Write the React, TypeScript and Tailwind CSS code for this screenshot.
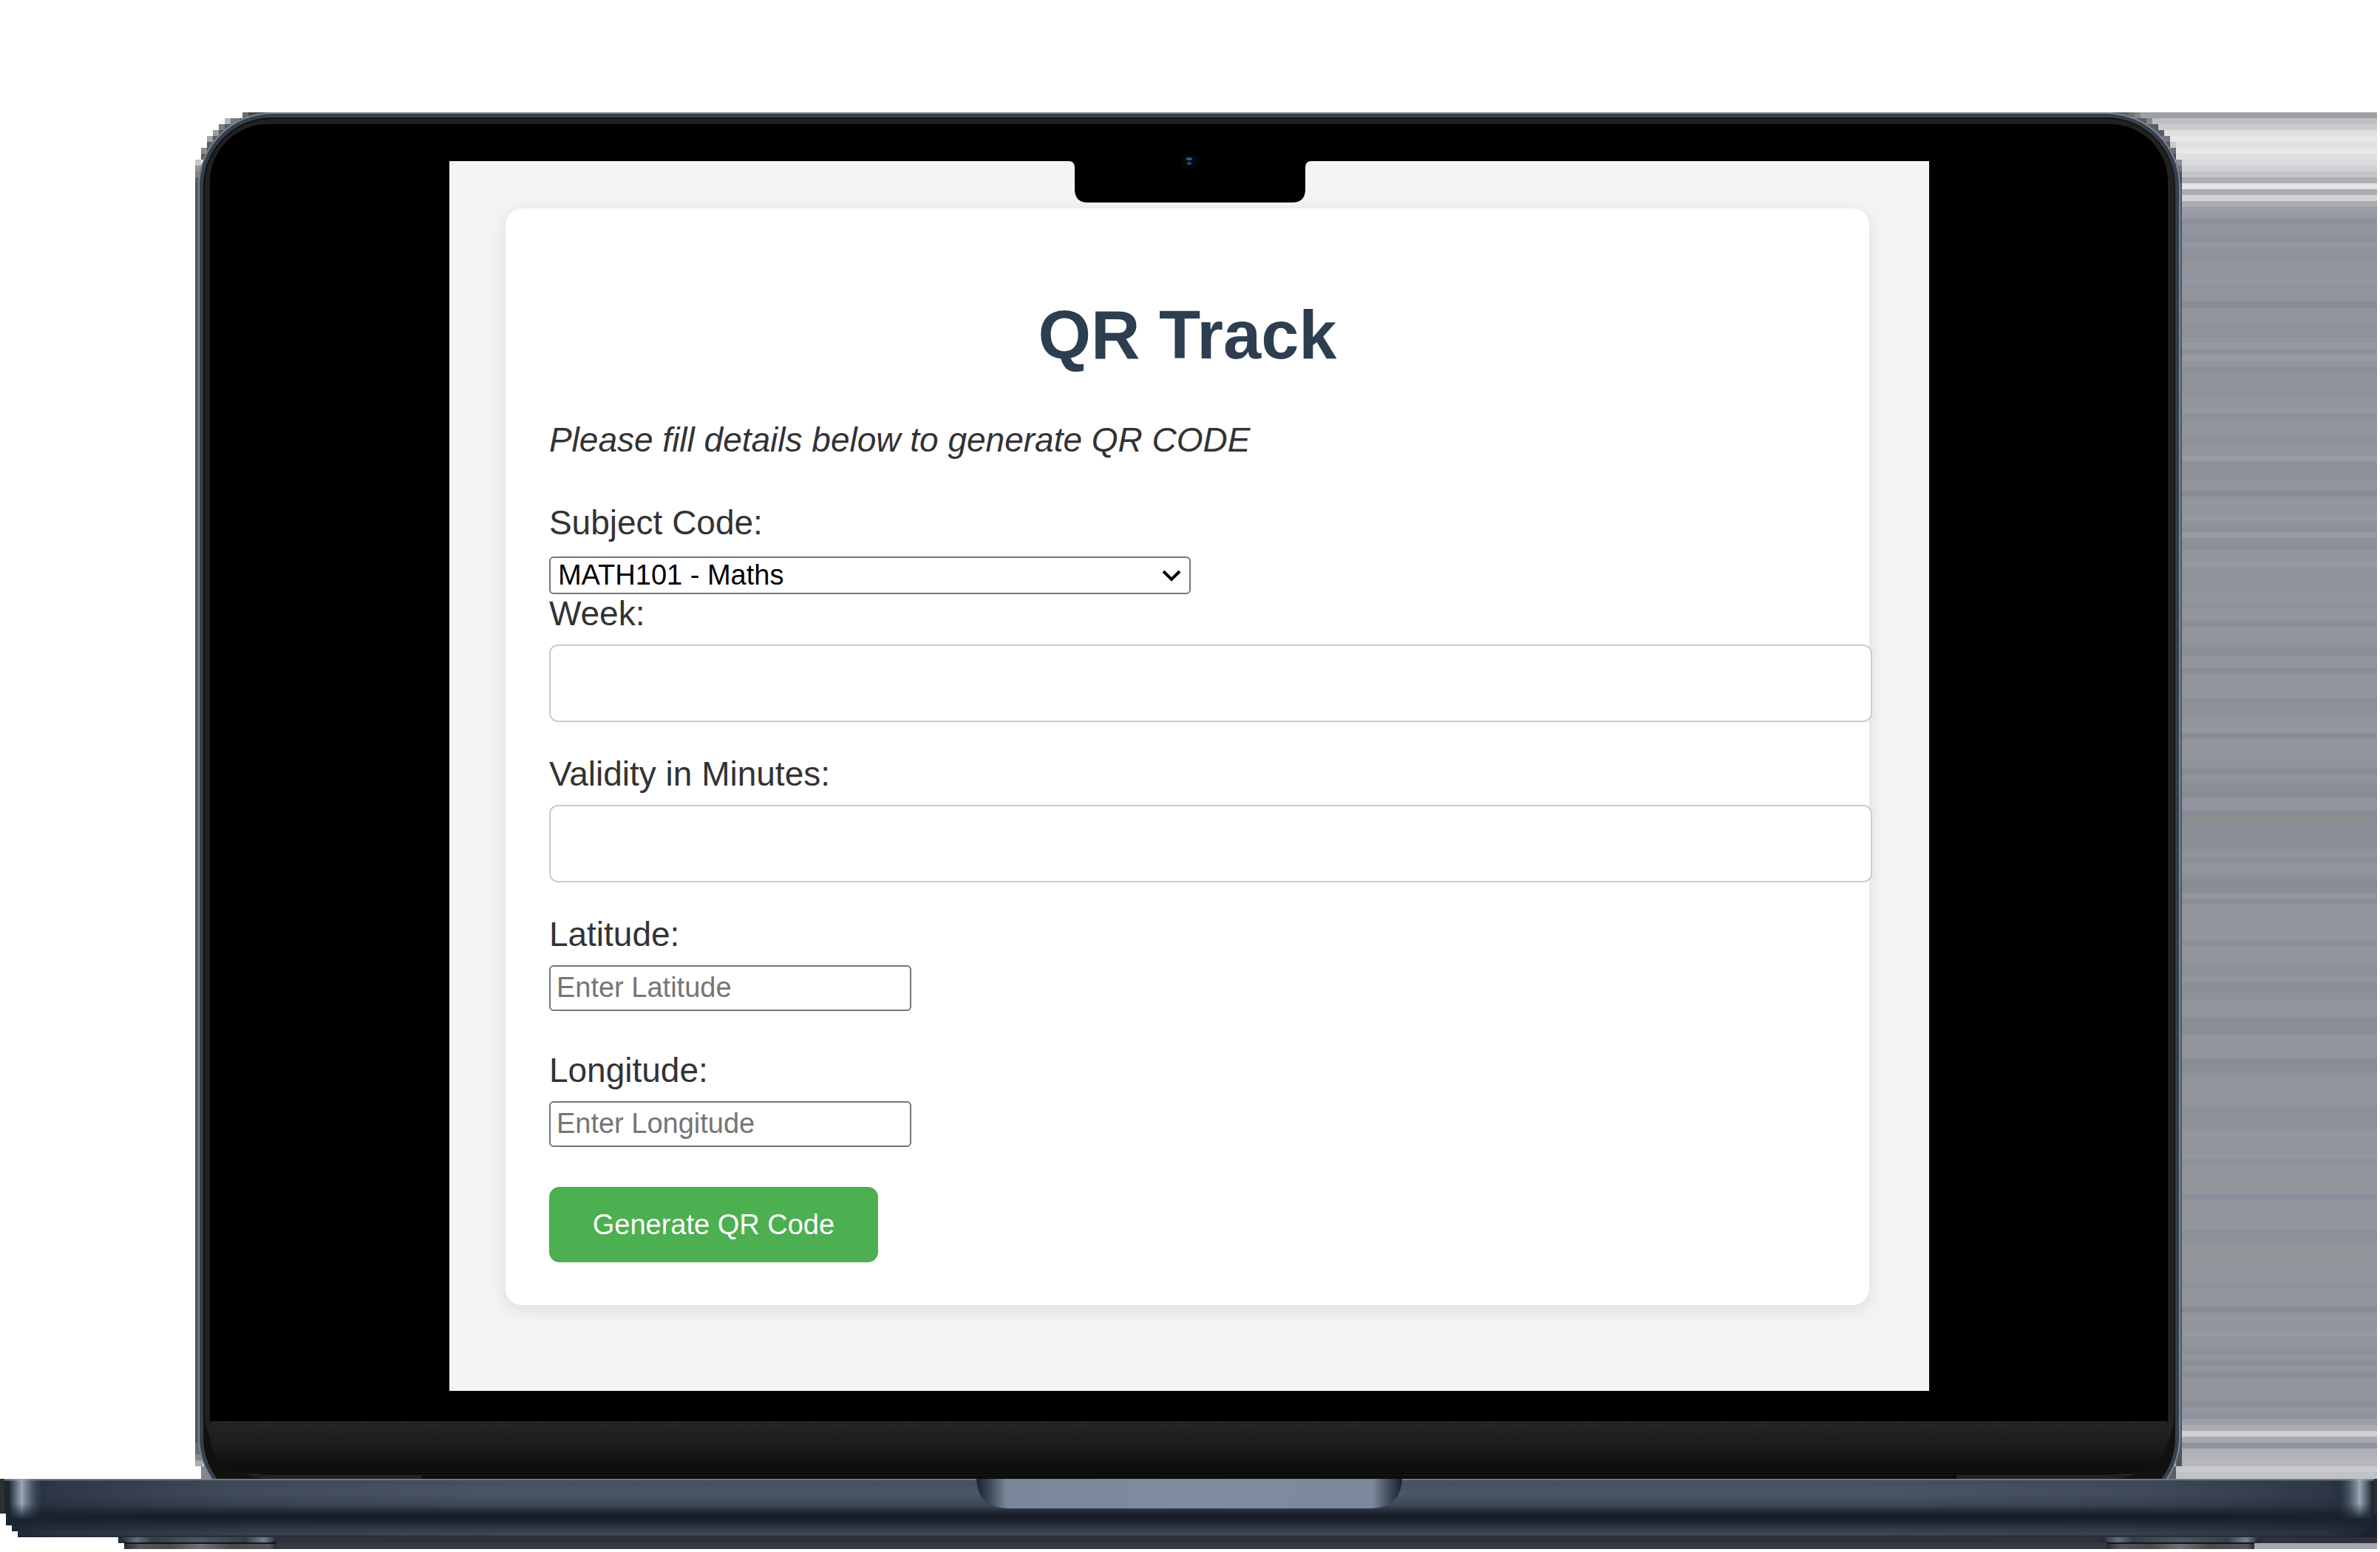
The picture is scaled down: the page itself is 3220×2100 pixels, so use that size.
import React from "react";

const TOP_STREAKS = [
  "#9d9fa3", "#bfc0c4", "#cbcbcd", "#e1e1e1", "#e8e8ea", "#e1e1e4", "#e8e8ea", "#dfdfe1",
  "#dadadc", "#cfd0d2", "#c4c5c9", "#aeafb1", "#e3e4e8", "#adaeb2", "#d2d4d5", "#a9abae",
  "#9a9da7", "#979aa4", "#8e9199", "#9397a0", "#9195a0", "#8e9199", "#9397a1", "#8f929b",
  "#8e9199", "#91949d", "#92959e", "#92959f", "#9397a0", "#92959e", "#91949d", "#91949d",
  "#898c90",
];

const BOTTOM_STREAKS = [
  "#9b9ea8", "#abacb1", "#d0d1d3", "#a9aaae", "#8f939d", "#adafb5",
  "#b3b4b9", "#b6b7bb", "#c9cacc", "#c0c2c4",
];

const MID_STREAKS: [number, number, string][] = [
  [440, 16, "#8f929a"], [464, 8, "#969aa3"], [472, 8, "#8e9199"], [480, 8, "#989ba4"],
  [496, 8, "#8b9199"], [504, 32, "#8f929a"], [552, 8, "#9398a1"], [560, 8, "#8d9098"],
  [576, 8, "#91999f"], [592, 8, "#8d9098"], [616, 8, "#999ba5"], [624, 24, "#8e9199"],
  [664, 8, "#888c8e"], [680, 8, "#91969e"], [696, 8, "#959aa2"], [712, 8, "#8d9099"],
  [720, 8, "#989ba4"], [728, 16, "#8c9098"], [760, 8, "#959aa2"], [768, 32, "#8e9299"],
  [816, 8, "#8d9199"], [840, 8, "#8b8e96"], [872, 16, "#8b9098"], [888, 8, "#93969f"],
  [904, 8, "#8a8d96"], [944, 8, "#8b9199"], [952, 16, "#8d9098"], [984, 8, "#92999f"],
  [992, 8, "#8a8d96"], [1032, 8, "#8c959c"], [1040, 8, "#898c8e"], [1056, 16, "#8b9098"],
  [1072, 8, "#888b94"], [1096, 8, "#898c96"], [1104, 8, "#8a8e8f"], [1112, 40, "#8b9098"],
  [1160, 8, "#8b9199"], [1184, 8, "#8a9097"], [1192, 16, "#898c94"], [1216, 8, "#8a8d96"],
  [1272, 8, "#8b8f96"], [1304, 16, "#8c9198"], [1320, 8, "#93969f"], [1328, 24, "#8b9098"],
  [1376, 24, "#8a8f96"], [1400, 8, "#92959e"], [1432, 16, "#8a8d95"], [1448, 8, "#8a9198"],
  [1496, 8, "#8b9199"], [1504, 24, "#8d9098"], [1560, 8, "#9397a0"], [1568, 8, "#8d9199"],
  [1600, 8, "#909596"], [1616, 8, "#8d9099"], [1640, 32, "#92959e"], [1664, 8, "#8a9199"],
  [1672, 8, "#8d9098"], [1696, 8, "#929596"], [1712, 24, "#92959e"], [1736, 8, "#8a9199"],
  [1768, 8, "#888c8e"], [1800, 8, "#959aa2"], [1824, 8, "#8b9199"], [1840, 8, "#8d9098"],
  [1856, 8, "#8b9098"], [1896, 8, "#8d9099"], [1904, 8, "#9397a1"], [1912, 8, "#8e9199"],
];

/* x, y, width and colour of the stair-stepped blocks round the lid's corners */
const LID_STEPS: [number, number, number, string][] = [
  [328, 152, 8, "#6b6d70"], [336, 152, 44, "#45474c"],
  [304, 160, 8, "#b3b4b6"], [312, 160, 12, "#77797c"], [324, 160, 20, "#47494e"],
  [296, 168, 8, "#7b7c7f"], [304, 168, 20, "#55575b"],
  [288, 176, 8, "#9b9c9e"], [296, 176, 16, "#55575b"],
  [280, 184, 8, "#a3a4a6"], [288, 184, 12, "#55575b"],
  [280, 192, 12, "#5b5d60"],
  [272, 200, 8, "#8b8c8f"], [280, 200, 8, "#4d4f53"],
  [272, 208, 10, "#5b5d60"],
  [264, 216, 8, "#c5c6ca"], [264, 224, 8, "#929396"], [264, 232, 8, "#828386"], [264, 240, 8, "#5d6064"],
  [2856, 152, 24, "#5d6064"], [2880, 152, 8, "#6f7676"], [2888, 152, 8, "#83878a"],
  [2888, 160, 16, "#5b5d60"], [2904, 160, 8, "#87888c"],
  [2904, 168, 16, "#5b5d60"], [2912, 176, 16, "#5b5d60"],
  [2920, 184, 16, "#77797c"], [2928, 192, 8, "#55575b"], [2936, 192, 8, "#c9cacc"],
  [2936, 200, 8, "#6b6c70"], [2936, 208, 8, "#47494e"],
  [2944, 216, 8, "#8b8c8f"], [2944, 224, 8, "#707276"], [2944, 232, 8, "#55575b"], [2944, 240, 8, "#484a4e"],
];

function Laptop() {
  return (
    <svg className="col-start-1 row-start-1 block w-full" viewBox="0 0 3220 2100" aria-hidden="true">
      <defs>
        <linearGradient id="base" x1="0" y1="2001" x2="0" y2="2080" gradientUnits="userSpaceOnUse">
          <stop offset="0" stopColor="#8a93a3" />
          <stop offset="0.03" stopColor="#465160" />
          <stop offset="0.25" stopColor="#4c5665" />
          <stop offset="0.45" stopColor="#3d4858" />
          <stop offset="0.54" stopColor="#262f3e" />
          <stop offset="0.62" stopColor="#161b27" />
          <stop offset="0.7" stopColor="#181e2a" />
          <stop offset="0.82" stopColor="#2b3643" />
          <stop offset="0.95" stopColor="#414858" />
          <stop offset="1" stopColor="#262a38" />
        </linearGradient>
        <linearGradient id="ends">
          <stop offset="0" stopColor="#1b2431" stopOpacity="1" />
          <stop offset="0.02" stopColor="#1b2431" stopOpacity="0.6" />
          <stop offset="0.1" stopColor="#1b2431" stopOpacity="0.2" />
          <stop offset="0.22" stopColor="#1b2431" stopOpacity="0" />
          <stop offset="0.78" stopColor="#1b2431" stopOpacity="0" />
          <stop offset="0.9" stopColor="#1b2431" stopOpacity="0.2" />
          <stop offset="0.98" stopColor="#1b2431" stopOpacity="0.6" />
          <stop offset="1" stopColor="#1b2431" stopOpacity="1" />
        </linearGradient>
        <linearGradient id="shine">
          <stop offset="0" stopColor="#9ba7b6" stopOpacity="0" />
          <stop offset="0.38" stopColor="#9ba7b6" stopOpacity="1" />
          <stop offset="0.55" stopColor="#8996a6" stopOpacity="0.7" />
          <stop offset="1" stopColor="#4a5665" stopOpacity="0" />
        </linearGradient>
        <linearGradient id="fade" x1="0" y1="0" x2="0" y2="1">
          <stop offset="0" stopColor="#fff" />
          <stop offset="0.6" stopColor="#fff" />
          <stop offset="1" stopColor="#000" />
        </linearGradient>
        <mask id="shineMask" maskUnits="userSpaceOnUse" x="0" y="2000" width="3220" height="60">
          <rect y="2001" width="3220" height="55" fill="url(#fade)" />
        </mask>
        <linearGradient id="chin" x1="0" y1="0" x2="0" y2="1">
          <stop offset="0" stopColor="#272524" />
          <stop offset="0.55" stopColor="#1b1a18" />
          <stop offset="0.85" stopColor="#0f0f0f" />
        </linearGradient>
        <linearGradient id="grip">
          <stop offset="0" stopColor="#182130" />
          <stop offset="0.03" stopColor="#3b4757" />
          <stop offset="0.07" stopColor="#7a879a" />
          <stop offset="0.5" stopColor="#7f8c9f" />
          <stop offset="0.93" stopColor="#7c889b" />
          <stop offset="0.97" stopColor="#3f4b5b" />
          <stop offset="1" stopColor="#182130" />
        </linearGradient>
        <linearGradient id="footTop">
          <stop offset="0" stopColor="#252d39" />
          <stop offset="0.1" stopColor="#62707f" />
          <stop offset="0.2" stopColor="#343f4d" />
          <stop offset="0.5" stopColor="#4c5766" />
          <stop offset="0.8" stopColor="#343f4d" />
          <stop offset="0.92" stopColor="#73808f" />
          <stop offset="1" stopColor="#252d39" />
        </linearGradient>
        <linearGradient id="footBottom">
          <stop offset="0" stopColor="#2c2c2c" />
          <stop offset="0.1" stopColor="#565656" />
          <stop offset="0.3" stopColor="#484848" />
          <stop offset="0.5" stopColor="#727272" />
          <stop offset="0.7" stopColor="#484848" />
          <stop offset="0.95" stopColor="#565656" />
          <stop offset="1" stopColor="#2c2c2c" />
        </linearGradient>
        <clipPath id="aboveBase">
          <rect width="3220" height="2001" />
        </clipPath>
      </defs>

      <g shapeRendering="crispEdges">
        <path d="M2952 400H3216V2001H2944V1984H2952Z" fill="#92959e" />
        {TOP_STREAKS.map((c, i) => (
          <rect key={i} x={i < 12 ? 2890 : 2950} y={152 + i * 8} width={i < 12 ? 326 : 266} height="8" fill={c} />
        ))}
        {MID_STREAKS.map(([y, h, c]) => (
          <rect key={y} x="2950" y={y} width="266" height={h} fill={c} />
        ))}
        {BOTTOM_STREAKS.map((c, i) => (
          <rect key={i} x="2930" y={1920 + i * 8} width="286" height={i === 9 ? 9 : 8} fill={c} />
        ))}
        <path d="M264 248H272V1984H264Z" fill="#51565b" />
        <path d="M2944 248H2952V1984H2944Z" fill="#50565f" />
        <path d="M264 1952h10v16h-10z" fill="#6b6c70" />
        <path d="M264 1968h10v8h-10z" fill="#84868a" />
        <path d="M264 1976h10v8h-10z" fill="#aaabad" />
        <path d="M272 1984h16v17h-16z" fill="#85888d" />
        <path d="M2930 1984h14v17h-14z" fill="#5b5d60" />
        {LID_STEPS.map(([x, y, w, c]) => (
          <rect key={x + "-" + y} x={x} y={y} width={w} height="8" fill={c} />
        ))}
      </g>

      <g clipPath="url(#aboveBase)">
        <rect x="268" y="152" width="2682" height="1893" rx="100" fill="#7b8590" />
        <rect x="270" y="154" width="2678" height="1889" rx="98" fill="#35404e" />
        <rect x="275" y="159" width="2668" height="1879" rx="93" fill="#11110f" />
        <rect x="277" y="161" width="2665" height="1841" rx="91" fill="#22211f" />
        <rect x="284" y="168" width="2649" height="1827" rx="78" fill="#000" />
        <path d="M285 1923H2932V1942C2932 1974 2911 1994 2880 1994H337C306 1994 285 1974 285 1942Z" fill="url(#chin)" />
        <path d="M571 2001H2647V1996H571Z" fill="#0c0c0c" />
      </g>

      <g shapeRendering="crispEdges">
        <path d="M0 2001H10V2048H0ZM3208 2001H3216V2048H3208Z" fill="#2f2f2f" />
        <path d="M375 2079H2842V2088H375ZM3058 2079H3216V2088H3058Z" fill="#2f303b" />
        <path d="M368 2088H2850V2096H368Z" fill="#343a46" />
        <path d="M3050 2088H3216V2096H3050Z" fill="#a5a8ac" />
        <path d="M3140 2048H3216V2080H3140Z" fill="#1d202d" />
        <path d="M160 2080H375V2088H160ZM2842 2080H3058V2088H2842Z" fill="#252d39" />
      </g>
      <path d="M6 2001H3212V2046Q3212 2080 3170 2080H24V2072H16V2064H8V2048H6Z" fill="url(#base)" />
      <path d="M6 2004H3212V2046Q3212 2080 3170 2080H24V2072H16V2064H8V2048H6Z" fill="url(#ends)" />
      <g mask="url(#shineMask)">
        <rect x="12" y="2001" width="46" height="55" fill="url(#shine)" />
        <rect x="-3210" y="2001" width="46" height="55" fill="url(#shine)" transform="scale(-1 1)" />
      </g>
      <path d="M1321 2001H1897C1895 2030 1880 2041 1851 2041H1367C1338 2041 1323 2030 1321 2001Z" fill="url(#grip)" />
      <path d="M164 2080H374L368 2087H170Z" fill="url(#footTop)" />
      <path d="M2844 2080H3056L3050 2087H2850Z" fill="url(#footTop)" />
      <rect x="168" y="2087" width="206" height="9" fill="url(#footBottom)" />
      <rect x="2850" y="2087" width="200" height="9" fill="url(#footBottom)" />
      <path d="M168 2087H374V2089H168ZM2850 2087H3050V2089H2850Z" fill="#151515" />
    </svg>
  );
}

function Notch() {
  return (
    <svg
      className="absolute top-0 left-1/2 w-[328px] -translate-x-1/2 overflow-visible"
      viewBox="0 0 328 56"
      aria-hidden="true"
    >
      <path d="M1 -1V0Q9 0 9 9V38Q9 56 27 56H303Q321 56 321 38V9Q321 0 329 0V-1Z" fill="#000" />
      <circle cx="164" cy="0" r="12" fill="#050505" />
      <circle cx="164" cy="0" r="8" fill="#080a0c" />
      <ellipse cx="164" cy="-3" rx="4" ry="2" fill="#1f5f99" />
      <ellipse cx="164" cy="3" rx="3" ry="2" fill="#1a4f80" />
    </svg>
  );
}

function WideField({ id, label }: { id: string; label: string }) {
  return (
    <div className="mb-11 flex flex-col gap-4">
      <label htmlFor={id}>{label}</label>
      <input
        id={id}
        type="text"
        className="h-[105px] w-[calc(100%+63px)] rounded-xl border-2 border-[#ccc] bg-white px-7 text-[38px] outline-none"
      />
    </div>
  );
}

function SmallField({ id, label }: { id: string; label: string }) {
  return (
    <div className="mb-[54px] flex flex-col items-start gap-4">
      <label htmlFor={id}>{label}</label>
      <input
        id={id}
        type="text"
        placeholder={"Enter " + label.replace(":", "")}
        className="h-[62px] w-[490px] rounded-md border-2 border-[#767676] bg-white px-2 text-[38px] outline-none placeholder:text-[#757575]"
      />
    </div>
  );
}

export default function App() {
  return (
    <div className="grid w-full bg-white font-['Liberation_Sans',Arial,sans-serif]">
      <Laptop />
      <div className="z-10 col-start-1 row-start-1 self-start pt-[6.77%] pr-[18.94%] pl-[18.88%]">
        <main className="relative bg-[#f4f4f4] pt-16 pr-[81px] pb-[116px] pl-[76px]">
          <Notch />
          <form
            className="rounded-[22px] bg-white px-[59px] pt-[119px] pb-[58px] text-[46px] leading-[52px] text-[#333] shadow-[0_6px_24px_rgba(0,0,0,0.1)]"
            onSubmit={(e) => e.preventDefault()}
          >
            <h1 className="mb-16 text-center text-[92px] leading-[104px] font-bold text-[#2c3e50]">QR Track</h1>
            <p className="mb-[60px] italic">Please fill details below to generate QR CODE</p>
            <div className="flex flex-col gap-5">
              <label htmlFor="subject">Subject Code:</label>
              <div className="relative w-[868px]">
                <select
                  id="subject"
                  className="block h-[51px] w-full appearance-none rounded-md border-2 border-[#767676] bg-white px-[10px] text-[38px] leading-[46px] text-black outline-none"
                >
                  <option>MATH101 - Maths</option>
                </select>
                <svg
                  className="pointer-events-none absolute top-[17px] right-3 w-7"
                  viewBox="0 0 28 18"
                  fill="none"
                  stroke="#000"
                  strokeWidth="4"
                  aria-hidden="true"
                >
                  <path d="M3 3L14 14L25 3" />
                </svg>
              </div>
            </div>
            <WideField id="week" label="Week:" />
            <WideField id="validity" label="Validity in Minutes:" />
            <SmallField id="latitude" label="Latitude:" />
            <SmallField id="longitude" label="Longitude:" />
            <button
              type="submit"
              className="block h-[102px] w-[445px] rounded-[14px] bg-[#4caf50] text-[38px] leading-[44px] text-white"
            >
              Generate QR Code
            </button>
          </form>
        </main>
      </div>
    </div>
  );
}
